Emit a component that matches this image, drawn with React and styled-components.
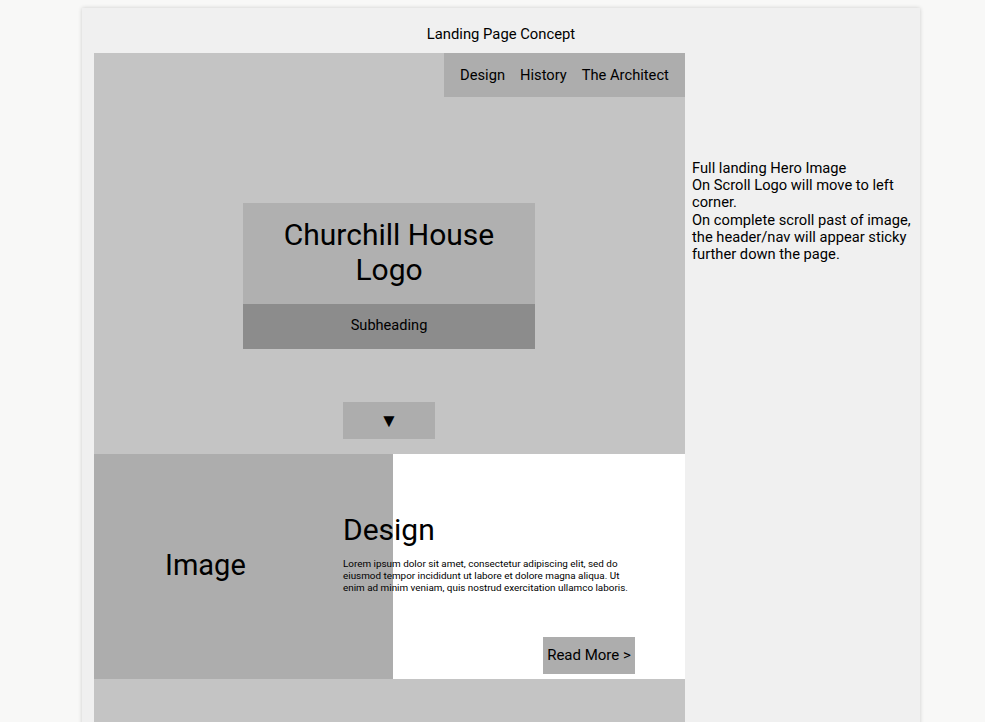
import React from "react";
import styled, { createGlobalStyle } from "styled-components";

const Global = createGlobalStyle`
  html, body { margin: 0; padding: 0; background: #f8f8f7; }
  body { font-family: Roboto, "Liberation Sans", sans-serif; color: #000; overflow: hidden; }
`;

const Frame = styled.div`
  margin: 8px 0 0 82px;
  width: 838px;
  background: #f0f0f0;
  box-shadow: 0 0 4px rgba(0, 0, 0, 0.18);
  padding: 0 0 0 12px;
  box-sizing: border-box;
  min-height: 760px;
`;

const Title = styled.div`
  height: 45px;
  display: flex;
  align-items: center;
  justify-content: center;
  padding: 7px 12px 0 0;
  box-sizing: border-box;
  font-size: 14.8px;
`;

const Body = styled.div`
  display: flex;
  gap: 7px;
`;

const Column = styled.div`
  width: 591px;
  display: flex;
  flex-direction: column;
`;

const Hero = styled.section`
  height: 401px;
  background: #c4c4c4;
  display: flex;
  flex-direction: column;
  align-items: center;
`;

const Nav = styled.nav`
  align-self: flex-end;
  width: 241px;
  height: 44px;
  background: #adadad;
  display: flex;
  align-items: center;
  justify-content: center;
  gap: 15px;
  font-size: 14.7px;
`;

const LogoBox = styled.div`
  margin: 106px 1px 0 0;
  width: 292px;
  display: flex;
  flex-direction: column;
`;

const LogoText = styled.div`
  height: 101px;
  background: #b0b0b0;
  display: flex;
  align-items: center;
  justify-content: center;
  text-align: center;
  font-size: 30px;
  line-height: 35px;
  padding-bottom: 4px;
  box-sizing: border-box;
`;

const Subheading = styled.div`
  height: 45px;
  background: #8c8c8c;
  display: flex;
  align-items: center;
  justify-content: center;
  font-size: 14.6px;
  padding-bottom: 3px;
  box-sizing: border-box;
`;

const ArrowButton = styled.div`
  margin: 53px 1px 0 0;
  width: 92px;
  height: 37px;
  background: #adadad;
  display: flex;
  align-items: center;
  justify-content: center;
  font-size: 19px;
`;

const Feature = styled.section`
  height: 225px;
  display: grid;
  grid-template-columns: 299px 1fr;
  background: #fff;
`;

const ImagePanel = styled.div`
  background: #adadad;
  display: flex;
  align-items: center;
  padding: 0 0 4px 71px;
  font-size: 29px;
`;

const TextPanel = styled.div`
  position: relative;
  margin-left: -50px;
  width: 292px;
  display: flex;
  flex-direction: column;
  padding-top: 58px;
  box-sizing: border-box;
`;

const Heading = styled.h2`
  margin: 0;
  font-weight: 400;
  font-size: 30px;
  line-height: 35px;
`;

const Lorem = styled.p`
  margin: 11px 0 0;
  font-size: 9.9px;
  line-height: 12px;
`;

const ReadMore = styled.div`
  margin-top: auto;
  margin-bottom: 5px;
  align-self: flex-end;
  width: 92px;
  height: 37px;
  background: #adadad;
  display: flex;
  align-items: center;
  justify-content: center;
  font-size: 15px;
  padding-bottom: 1px;
  box-sizing: border-box;
`;

const NextSection = styled.section`
  height: 120px;
  background: #c4c4c4;
`;

const Note = styled.div`
  margin-top: 107px;
  width: 226px;
  font-size: 14.7px;
  line-height: 17.2px;
`;

export default function App() {
  return (
    <>
      <Global />
      <Frame>
        <Title>Landing Page Concept</Title>
        <Body>
          <Column>
            <Hero>
              <Nav>
                <span>Design</span>
                <span>History</span>
                <span>The Architect</span>
              </Nav>
              <LogoBox>
                <LogoText>
                  Churchill House
                  <br />
                  Logo
                </LogoText>
                <Subheading>Subheading</Subheading>
              </LogoBox>
              <ArrowButton>▼</ArrowButton>
            </Hero>
            <Feature>
              <ImagePanel>Image</ImagePanel>
              <TextPanel>
                <Heading>Design</Heading>
                <Lorem>
                  Lorem ipsum dolor sit amet, consectetur adipiscing elit, sed do
                  <br />
                  eiusmod tempor incididunt ut labore et dolore magna aliqua. Ut
                  <br />
                  enim ad minim veniam, quis nostrud exercitation ullamco laboris.
                </Lorem>
                <ReadMore>Read More &gt;</ReadMore>
              </TextPanel>
            </Feature>
            <NextSection />
          </Column>
          <Note>
            Full landing Hero Image
            <br />
            On Scroll Logo will move to left corner.
            <br />
            On complete scroll past of image, the header/nav will appear sticky further down the
            page.
          </Note>
        </Body>
      </Frame>
    </>
  );
}
